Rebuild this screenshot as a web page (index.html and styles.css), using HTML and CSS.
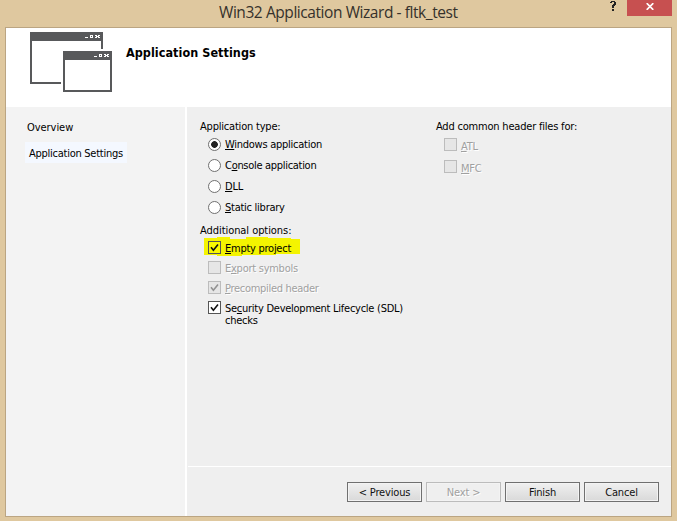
FILE: index.html
```html
<!DOCTYPE html>
<html lang="en">
<head>
<meta charset="utf-8">
<title>Win32 Application Wizard - fltk_test</title>
<link rel="stylesheet" href="styles.css">
</head>
<body>
<div class="window">
  <header class="titlebar">
    <h1 class="caption">Win32 Application Wizard - fltk_test</h1>
    <div class="controls">
      <svg class="help" width="6" height="10" viewBox="0 0 6 10" shape-rendering="crispEdges" fill="#222"><path d="M1 0h4v1h1v3h-1v1h-1v2h-2v-3h1v-1h1v-2h-2v1h-2v-1h1zM2 8h2v2h-2z"/></svg>
      <div class="close"><svg width="8" height="7" viewBox="0 0 8 7" fill="none" stroke="#fff" stroke-width="1.7"><path d="M.7.2 7.3 6.8M7.3.2.7 6.8"/></svg></div>
    </div>
  </header>
  <main class="dialog">
    <section class="banner">
      <svg class="logo" width="82" height="60" viewBox="0 0 82 60" shape-rendering="crispEdges">
        <path fill="#58595b" d="M0 0h73v17h-2v-8h-69v41h29v2h-31zM33 19h49v41h-49zM35 28v30h45v-30z" fill-rule="evenodd"/>
        <g id="controls" fill="#fff"><path fill-rule="evenodd" d="M55 5h3v1h-3zM60 3h3v3h-3zM61 4v1h1v-1zM65 3h2v1h1v-1h2v1h-1v1h1v1h-2v-1h-1v1h-2v-1h1v-1h-1z"/></g>
        <use href="#controls" x="9" y="19"/>
      </svg>
      <h2 class="heading">Application Settings</h2>
    </section>
    <div class="body">
      <nav class="sidebar">
        <div class="nav overview"><span>Overview</span></div>
        <div class="nav current"><span>Application Settings</span></div>
      </nav>
      <div class="page">
        <div class="settings">
          <div class="left">
            <div class="group">Application type:</div>
            <div class="radios">
              <label class="option"><i class="radio on"></i><span><u>W</u>indows application</span></label>
              <label class="option"><i class="radio"></i><span class="tight">C<u>o</u>nsole application</span></label>
              <label class="option"><i class="radio"></i><span><u>D</u>LL</span></label>
              <label class="option"><i class="radio"></i><span><u>S</u>tatic library</span></label>
            </div>
            <div class="group loose">Additional options:</div>
            <div class="checks">
              <label class="option marked"><svg class="marker" width="96" height="19" viewBox="0 0 96 19"><path fill="#f4f400" d="M0 1h13V0h13v2h16V0h22v1h23v1h9v15H72v1H38v1H13v-1H0z"/></svg><i class="box"><svg class="tick" viewBox="0 0 13 13"><path d="M3 6.2 5.4 9.2 10 3.5"/></svg></i><span><u>E</u>mpty project</span></label>
              <label class="option off"><i class="box"></i><span>E<u>x</u>port symbols</span></label>
              <label class="option off"><i class="box"><svg class="tick" viewBox="0 0 13 13"><path d="M3 6.2 5.4 9.2 10 3.5"/></svg></i><span class="tight"><u>P</u>recompiled header</span></label>
              <label class="option sdl"><i class="box"><svg class="tick" viewBox="0 0 13 13"><path d="M3 6.2 5.4 9.2 10 3.5"/></svg></i><span>Se<u>c</u>urity Development Lifecycle (SDL)<br>checks</span></label>
            </div>
          </div>
          <div class="right">
            <div class="group">Add common header files for:</div>
            <div class="headers">
              <label class="option off"><i class="box"></i><span><u>A</u>TL</span></label>
              <label class="option off"><i class="box"></i><span><u>M</u>FC</span></label>
            </div>
          </div>
        </div>
        <footer class="actions">
          <button>&lt; Previous</button>
          <button disabled>Next &gt;</button>
          <button>Finish</button>
          <button>Cancel</button>
        </footer>
      </div>
    </div>
  </main>
</div>
</body>
</html>
```

FILE: styles.css
```css
* { box-sizing: border-box; }
body { margin: 0; overflow: hidden; }
.window {
  width: 677px; height: 521px; background: #dfc89f; color: #000;
  font: 11px/13px "DejaVu Sans Condensed", "DejaVu Sans", sans-serif;
  font-stretch: condensed; letter-spacing: -.26px;
  display: flex; flex-direction: column;
}
.titlebar { height: 27px; display: grid; grid-template-columns: 219px 1fr auto; padding-right: 5px; }
.caption { grid-column: 2; margin: 0; font: 400 15.5px/24px "Open Sans", sans-serif; color: #35312b; white-space: nowrap; letter-spacing: -.43px; }
.controls { display: flex; gap: 11px; align-items: flex-start; }
.help { margin-top: 1px; }
.close { width: 45px; height: 16px; background: #c75050; display: flex; justify-content: center; align-items: center; }
.close svg { margin-bottom: 3px; }
.dialog { margin-left: 5px; width: 667px; height: 490px; border: 1px solid #bba582; background: #fff; display: flex; flex-direction: column; }
.banner { height: 79px; display: flex; padding: 4px 0 0 24px; gap: 14px; }
.heading { margin: 13px 0 0; font-size: 12.5px; line-height: 16px; font-weight: 700; white-space: nowrap; letter-spacing: .05px; }
.body { flex: 1; display: flex; gap: 2px; }
.sidebar { width: 179px; background: #f3f3f3; padding-top: 10px; }
.nav { height: 21px; line-height: 21px; white-space: nowrap; }
.overview { padding-left: 21px; letter-spacing: -.05px; }
.current { margin: 4px 0 0 19px; width: 102px; padding: 1px 0 0 4px; background: #f4f8ff; }
.page { flex: 1; background: #efefef; display: flex; flex-direction: column; }
.settings { height: 359px; display: flex; padding: 13px 0 0 13px; }
.left { width: 236px; }
.group, .option span { white-space: nowrap; }
.group { letter-spacing: -.2px; }
.loose { letter-spacing: -.06px; }
.option { display: flex; gap: 4px; position: relative; height: 13px; }
.option i, .option span { position: relative; }
.option .tight { letter-spacing: -.3px; }
.radios { padding: 5px 0 0 8px; display: grid; gap: 8px; margin-bottom: 10px; }
.checks { padding: 4px 0 0 8px; display: grid; gap: 7px; }
.checks .option span { top: 1px; }
.checks .sdl span { line-height: 12px; top: 2px; }
.headers { padding: 5px 0 0 8px; display: grid; gap: 9px; }
.headers span { top: 2px; }
.radio { width: 13px; height: 13px; border: 1px solid #707070; border-radius: 50%; background: #fff; }
.on { background: radial-gradient(circle, #222 0 3px, #fff 3.7px); }
.box { width: 13px; height: 13px; border: 1px solid #555; background: #fff; }
.tick { display: block; width: 13px; height: 13px; margin: -1px; fill: none; stroke: #111; stroke-width: 1.6; }
.marker { position: absolute; left: -4px; top: -4px; }
.marked .box { background: #f9f900; }
.off { color: #a0a0a0; text-shadow: 1px 1px #fff; }
.off .box { border-color: #bcbcbc; background: #e6e6e6; }
.off .tick { stroke: #929292; }
u { text-decoration: underline; text-decoration-thickness: 1px; text-underline-offset: 1px; text-decoration-skip-ink: none; }
.actions { flex: 1; border-top: 1px solid #fff; margin-left: 1px; padding: 15px 12px 0 0; display: flex; gap: 4px; justify-content: flex-end; }
button { width: 75px; height: 20px; padding: 1px 0 0; border: 1px solid #707070; box-shadow: inset 0 0 0 1px #f3f3f3; background: linear-gradient(#f0f0f0, #d9d9d9); font: inherit; letter-spacing: -.15px; color: #111; white-space: nowrap; }
button:disabled { color: #a0a0a0; text-shadow: 1px 1px #fff; border-color: #bcbcbc; background: #efefef; }
```
